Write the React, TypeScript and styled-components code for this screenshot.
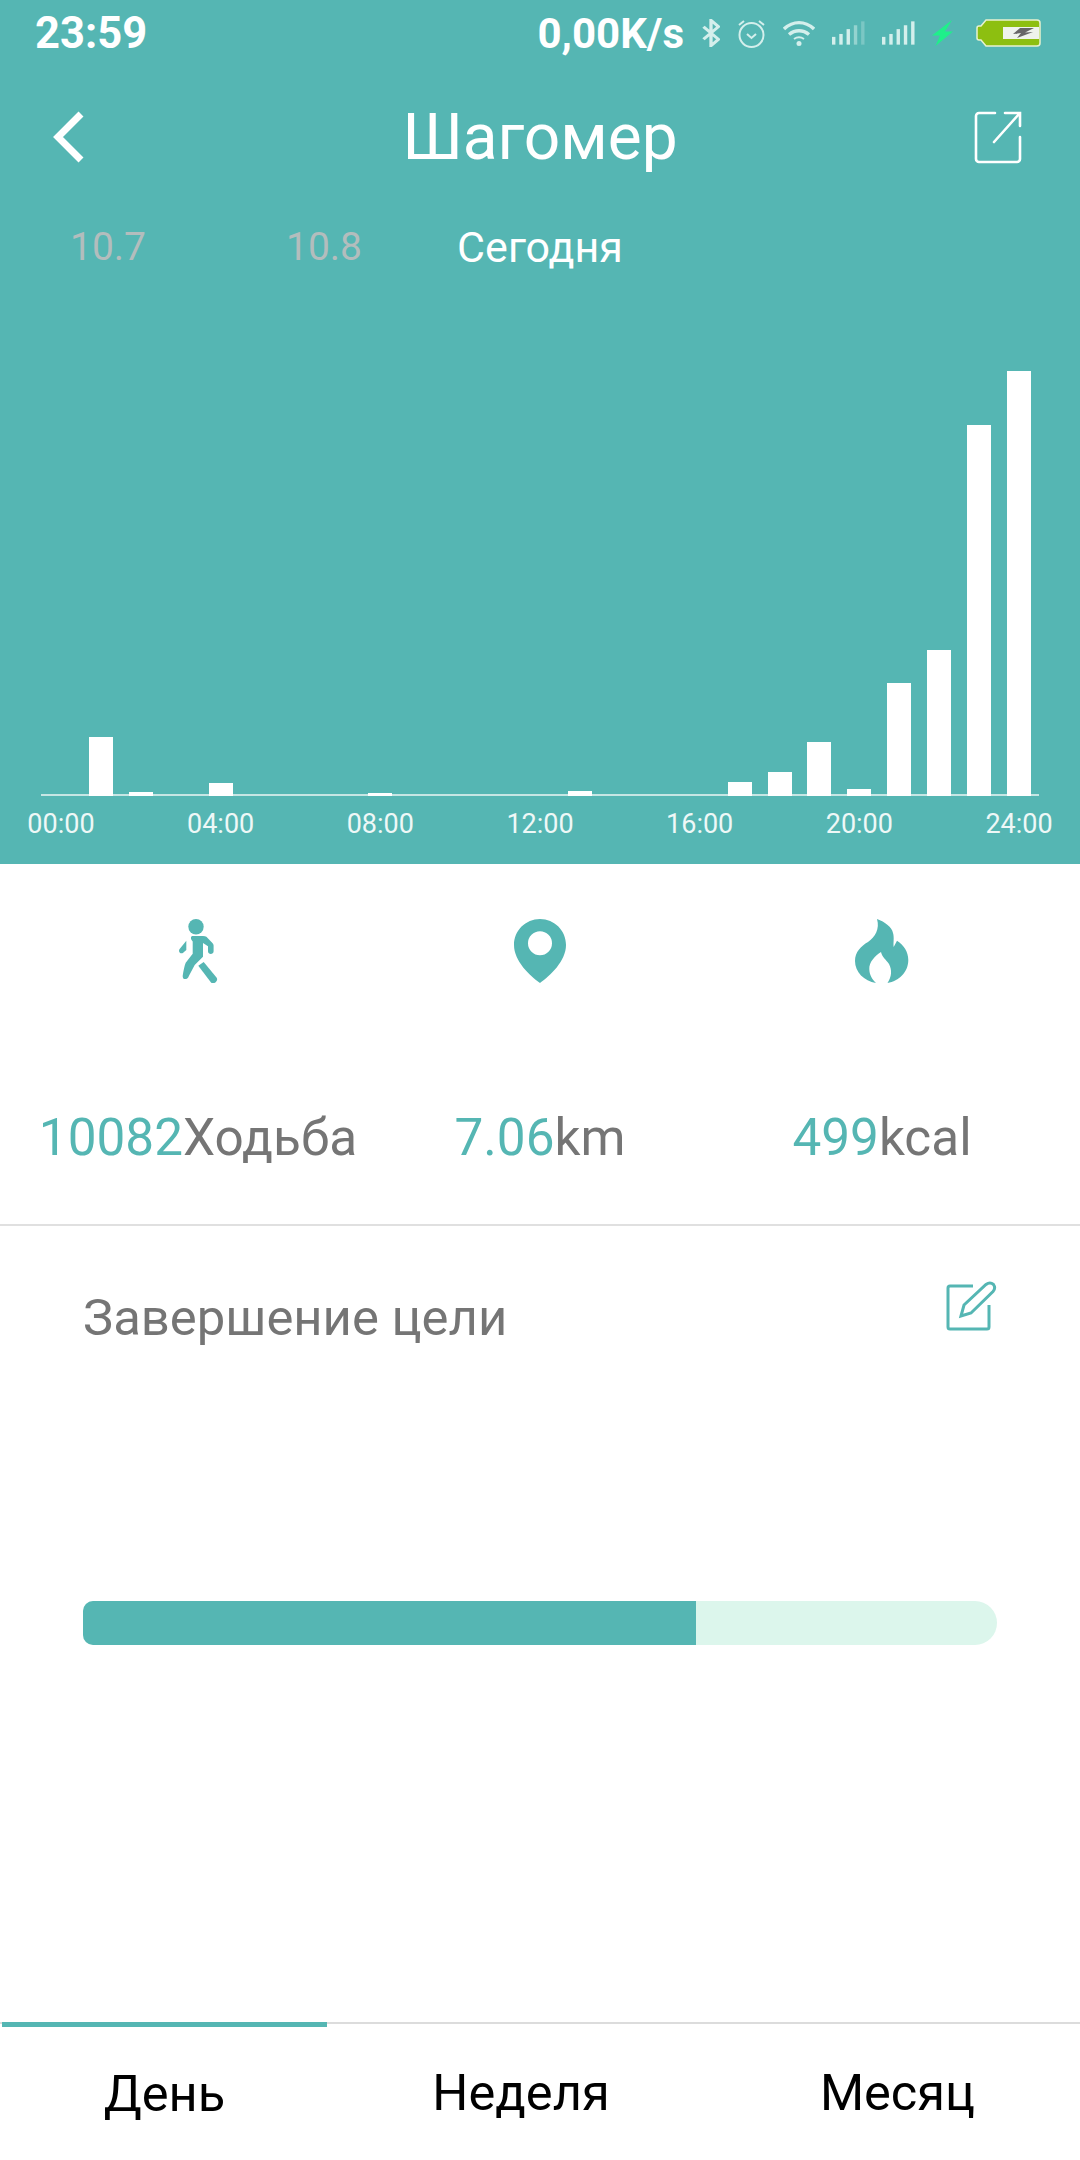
import React from 'react';
import styled, { createGlobalStyle } from 'styled-components';

const TEAL = '#55b6b3';

const GlobalStyle = createGlobalStyle`
  html, body {
    margin: 0;
    padding: 0;
    background: #fff;
  }
  * {
    box-sizing: border-box;
  }
`;

// steps per hour slot, in pixels above the baseline
const BARS = [0, 59, 4, 0, 13, 0, 0, 0, 3, 0, 0, 0, 0, 5, 0, 0, 0, 14, 24, 54, 7, 113, 146, 371, 425];
const HOURS = ['00:00', '04:00', '08:00', '12:00', '16:00', '20:00', '24:00'];

const App = () => {
  return (
    <Page>
      <GlobalStyle />
      <Hero>
        <StatusBar>
          <Clock>23:59</Clock>
          <StatusRight>
            <NetSpeed>0,00K/s</NetSpeed>
            <svg width="18" height="28" viewBox="6 1 12 22" preserveAspectRatio="none" fill="none" stroke="#d4efec" strokeWidth="2.2">
              <path d="M7 7l10 10-5 5V2l5 5L7 17" />
            </svg>
            <svg width="29" height="29" viewBox="0 0 29 29" fill="none" stroke="#d4efec" strokeWidth="2">
              <circle cx="14.5" cy="16" r="12" />
              <path d="M10 15l4.500 4 4.500-4" />
              <path d="M2 6l5-4M27 6l-5-4" />
            </svg>
            <svg width="32" height="26" viewBox="0 0 32 26" fill="none" stroke="#d4efec" strokeWidth="3.400">
              <path d="M1 9c9-8.500 21-8.500 30 0" />
              <path d="M6 14.500c6-5 14-5 20 0" />
              <path d="M11 19c3-2 7-2 10 0" strokeWidth="2" />
              <circle cx="16" cy="23.500" r="2.500" fill="#d4efec" stroke="none" />
            </svg>
            <SignalBars $fade />
            <SignalBars />
            <svg width="21" height="26" viewBox="0 0 21 26">
              <path d="M20 0L0 15.500h8L3.500 26 21 11.500h-8z" fill="#1ff08a" />
            </svg>
            <BatteryIcon />
          </StatusRight>
        </StatusBar>

        <NavBar>
          <svg width="31" height="52" viewBox="0 0 31 52" fill="none" stroke="#fff" strokeWidth="7">
            <path d="M28 3L5 26l23 23" />
          </svg>
          <Title>Шагомер</Title>
          <svg width="48" height="53" viewBox="0 0 48 53" fill="none" stroke="#fff" strokeWidth="2.6" strokeLinecap="round">
            <path d="M21 2H5a3 3 0 0 0-3 3v43a3 3 0 0 0 3 3h38a3 3 0 0 0 3-3V26" />
            <path d="M20 31L45 3M31 2h15v13" />
          </svg>
        </NavBar>

        <DateRow>
          <DateItem $dim>10.7</DateItem>
          <DateItem $dim>10.8</DateItem>
          <DateItem>Сегодня</DateItem>
        </DateRow>

        <Chart>
          <Plot>
            {BARS.map((h, i) => (
              <Slot key={i}>{h > 0 && <Bar style={{ height: h }} />}</Slot>
            ))}
          </Plot>
          <Axis>
            {BARS.map((_, i) => (
              <AxisSlot key={i}>{i % 4 === 0 && <AxisLabel>{HOURS[i / 4]}</AxisLabel>}</AxisSlot>
            ))}
          </Axis>
        </Chart>
      </Hero>

      <Stats>
        <Stat>
          <StatIcon>
            <svg width="40" height="64" viewBox="-1 0 40 64" fill={TEAL}>
              <circle cx="17" cy="7.7" r="7.7" />
              <path d="M14 17h10c1.500 0 2.600.3 3.400.8l6 6.200c.8.8 1.200 1.600 1.200 2.600v5.600c0 3.600-5.600 3.600-5.600 0v-5l-5-3.200v13.700l-8.300 8.300-5.700 10.700c-.9 2.600-2.600 3.400-3.900 3.400-1.700 0-2.600-1.400-2.400-3.400 .8-5 1.600-9.400 3-13l7-9V22.500C10.700 19 12 17 14 17z" />
              <path d="M19.300 46.700L24.700 43l13 15.800c1.800 3.200-3.400 7.400-5.700 4.600z" />
              <path d="M7.300 21.700V31l-3.400 3c-2.500 1.400-5-1.600-3.300-4z" />
            </svg>
          </StatIcon>
          <StatText>
            <StatValue>10082</StatValue>Ходьба
          </StatText>
        </Stat>
        <Stat>
          <StatIcon>
            <svg width="52" height="64" viewBox="0 0 52 64" fill={TEAL}>
              <path
                fillRule="evenodd"
                d="M26 0C11.600 0 0 11.600 0 26c0 16 16 31 26 38 10-7 26-22 26-38C52 11.600 40.400 0 26 0zm0 12.300a12 12 0 1 1 0 24 12 12 0 0 1 0-24z"
              />
            </svg>
          </StatIcon>
          <StatText>
            <StatValue>7.06</StatValue>km
          </StatText>
        </Stat>
        <Stat>
          <StatIcon>
            <svg width="54" height="64" viewBox="0 0 54 64" fill={TEAL}>
              <path d="M22 0c8 3 15 8 16 14 1.500 5 0 10 .7 14L42 21.700c7 4.300 11.300 11.300 11.300 19.300 0 12-9.300 21-20.800 23 4.500-7 4.500-13 1.500-19-2.500-4-7-7-8-12-6 4-12 10-11.700 17 .2 6 2.700 10 6.700 14C9 62 0 53 0 42c0-9 6-15 13-19C20 18 25 10 22 0z" />
            </svg>
          </StatIcon>
          <StatText>
            <StatValue>499</StatValue>kcal
          </StatText>
        </Stat>
      </Stats>

      <Goal>
        <GoalHeader>
          <GoalTitle>Завершение цели</GoalTitle>
          <svg width="51" height="50" viewBox="0 -1 51 50" fill="none" stroke={TEAL} strokeWidth="3">
            <path d="M27 4H4a2 2 0 0 0-2 2v39a2 2 0 0 0 2 2h37a2 2 0 0 0 2-2V23" />
            <path d="M15 34l3-11L40 2.500q4-3 7.500 0 2.500 3.500-.5 7L25 31z" />
          </svg>
        </GoalHeader>
        <Progress>
          <ProgressFill style={{ width: `${(612.6 / 914) * 100}%` }} />
        </Progress>
      </Goal>

      <TabBar>
        <Tab $active>День</Tab>
        <Tab>Неделя</Tab>
        <Tab>Месяц</Tab>
      </TabBar>
    </Page>
  );
};

const SignalBars = ({ $fade }: { $fade?: boolean }) => (
  <svg width="33" height="24" viewBox="0 0 34 24" fill="#d4efec">
    <rect x="0" y="16" width="3.500" height="8" />
    <rect x="7.500" y="13" width="3.500" height="11" />
    <rect x="15" y="8" width="3.500" height="16" />
    <rect x="22.500" y="4" width="3.500" height="20" opacity={$fade ? 0.5 : 1} />
    <rect x="30" y="0" width="3.500" height="24" opacity={$fade ? 0.3 : 1} />
  </svg>
);

const BatteryIcon = () => (
  <svg width="65" height="28" viewBox="0 0 65 28">
    <path d="M10 1h51a3 3 0 0 1 3 3v20a3 3 0 0 1-3 3H10L5 21H3a2 2 0 0 1-2-2V9a2 2 0 0 1 2-2h2z" fill="#8dbf10" stroke="#e8f2d0" strokeWidth="1.500" />
    <rect x="27" y="8" width="36" height="12" fill="#eef3ec" />
    <path d="M58 9H44l-7 6 8-1-4 5 16-6-8 .5z" fill="#666" />
  </svg>
);

export default App;

const Page = styled.div`
  width: 1080px;
  height: 2160px;
  display: flex;
  flex-direction: column;
  overflow: hidden;
  background: #fff;
  font-family: Roboto, 'Noto Sans', sans-serif;
`;

const Hero = styled.div`
  height: 864px;
  flex: none;
  display: flex;
  flex-direction: column;
  background: ${TEAL};
  color: #fff;
`;

const StatusBar = styled.div`
  height: 66px;
  padding: 0 39px 0 35px;
  display: flex;
  align-items: center;
  justify-content: space-between;
`;

const Clock = styled.span`
  font-size: 43.5px;
  font-weight: 700;
`;

const StatusRight = styled.div`
  display: flex;
  align-items: center;
  gap: 17px;

  svg:last-child {
    margin-left: 6px;
  }
`;

const NetSpeed = styled.span`
  margin-right: 1px;
  font-size: 42px;
  font-weight: 700;
`;

const NavBar = styled.div`
  height: 142px;
  padding: 0 58px 0 53px;
  display: grid;
  grid-template-columns: 1fr auto 1fr;
  align-items: center;

  svg:last-child {
    justify-self: end;
  }
`;

const Title = styled.div`
  margin-left: 5px;
  font-size: 64px;
  font-weight: 400;
`;

const DateRow = styled.div`
  height: 78px;
  display: grid;
  grid-template-columns: repeat(5, 216px);
  align-items: center;
`;

const DateItem = styled.div<{ $dim?: boolean }>`
  text-align: center;
  font-size: ${(p) => (p.$dim ? '39px' : '43px')};
  color: ${(p) => (p.$dim ? '#b3bdbd' : '#fff')};
`;

const Chart = styled.div`
  margin: 0 41px;
  width: 998px;
`;

const Plot = styled.div`
  height: 510px;
  display: grid;
  grid-template-columns: repeat(25, minmax(0, 1fr));
  align-items: end;
  border-bottom: 2px solid #c6e6e4;
`;

const Slot = styled.div`
  display: flex;
  justify-content: center;
`;

const Bar = styled.div`
  width: 24px;
  margin-bottom: -2px;
  background: #fff;
`;

const Axis = styled.div`
  display: grid;
  grid-template-columns: repeat(25, minmax(0, 1fr));
  padding-top: 10px;
`;

const AxisSlot = styled.div`
  display: flex;
  justify-content: center;
  height: 36px;
`;

const AxisLabel = styled.span`
  font-size: 27px;
  line-height: 36px;
  color: #eef8f7;
  white-space: nowrap;
`;

const Stats = styled.div`
  height: 362px;
  flex: none;
  padding-top: 55px;
  display: grid;
  grid-template-columns: repeat(3, 342px);
  justify-content: center;
  border-bottom: 2px solid #e0e0e0;
`;

const Stat = styled.div`
  display: flex;
  flex-direction: column;
  align-items: center;
  gap: 125px;
`;

const StatIcon = styled.div`
  height: 64px;
  display: flex;

  svg {
    display: block;
  }
`;

const StatText = styled.div`
  font-size: 51.3px;
  line-height: 60px;
  color: #757575;
`;

const StatValue = styled.span`
  color: ${TEAL};
`;

const Goal = styled.div`
  flex: 1;
  padding: 55px 83px 0;
`;

const GoalHeader = styled.div`
  display: flex;
  align-items: flex-start;
  justify-content: space-between;
`;

const GoalTitle = styled.div`
  padding-top: 9px;
  font-size: 50.8px;
  line-height: 56px;
  color: #757575;
`;

const Progress = styled.div`
  margin-top: 255px;
  height: 44px;
  background: #dcf6ec;
  border-radius: 10px 22px 22px 10px;
  overflow: hidden;
`;

const ProgressFill = styled.div`
  height: 100%;
  background: ${TEAL};
`;

const TabBar = styled.div`
  height: 138px;
  flex: none;
  padding-left: 2px;
  display: grid;
  grid-template-columns: 325px 388px 1fr;
  border-top: 2px solid #dcdcdc;
`;

const Tab = styled.div<{ $active?: boolean }>`
  display: flex;
  align-items: center;
  justify-content: center;
  font-size: 50.6px;
  color: #000;
  margin-top: ${(p) => (p.$active ? '-2px' : '0')};
  border-top: ${(p) => (p.$active ? `5px solid ${TEAL}` : 'none')};
`;
